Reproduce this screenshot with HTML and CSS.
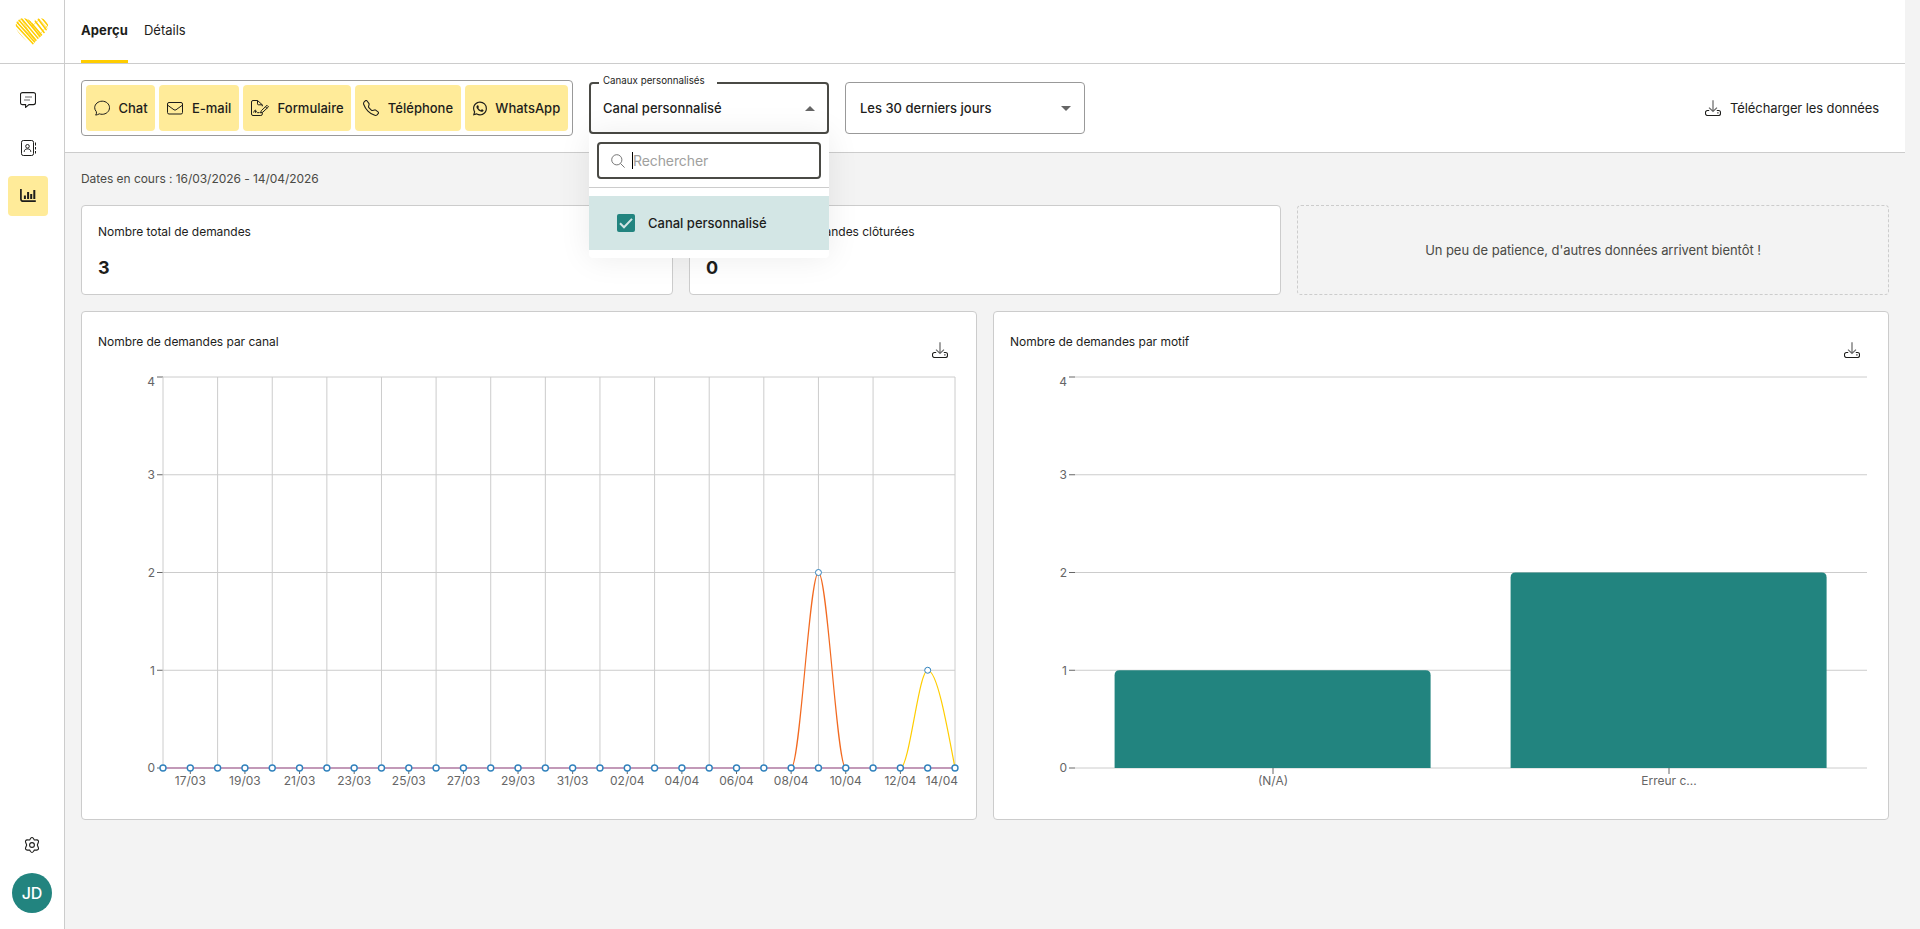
FILE: index.html
```
<!DOCTYPE html>
<html lang="fr">
<head>
  <meta charset="UTF-8" />
  <meta name="viewport" content="width=device-width, initial-scale=1" />
  <title>Statistiques - Aperçu</title>
  <link rel="stylesheet" href="styles.css">
</head>
<body>

  <!-- Icônes partagées -->
  <svg class="sprite" aria-hidden="true">
    <symbol id="i-download" viewBox="0 0 16 16">
      <path d="M8 .2v11M4 7.6l4 3.9 4-3.9" fill="none" stroke="#666" stroke-width="1.2"/>
      <path d="M4.2 10.5H2.4A1.9 1.9 0 0 0 .5 12.4v1.2a1.9 1.9 0 0 0 1.900 1.900h11.200a1.900 1.900 0 0 0 1.900-1.900v-1.200a1.900 1.900 0 0 0-1.900-1.900h-1.800M12.300 12.900h1.200" fill="none" stroke="#1d1d1b" stroke-width="1.100"/>
    </symbol>
  </svg>

  <div class="app">

    <!-- ====== BARRE LATÉRALE ====== -->
    <aside class="sidebar">
      <div class="logo">
        <svg width="34" height="30" viewBox="0 0 34 30" fill="none" stroke="#ffcd00">
          <defs>
            <clipPath id="heart"><path d="M17 29C13 24 1.500 17.500.8 9.500.3 4 4.500 1 9 1.200c3.500.1 6.500 2 8 4.800C18.500 3 21.500 1 25.500 1.200 30 1.500 33.500 4.500 33 9.500 32.200 16 22 21 17 29Z"/></clipPath>
          </defs>
          <g clip-path="url(#heart)">
            <path stroke-width="1.500" d="M-2 5 22 31M1 4 24 30M3 2 25 28M6 1 27 26M9 0 28 23M13 2 30 22M20 4 31 18M23 2 33 15M26 0 35 11"/>
            <path stroke-width=".6" d="M-2 9 18 32M2 6 25 27M5 0 23 29M10 2 29 22M19 2 32 19M15 4 27 25M22 0 34 13M17 9 25 2M25 17 33 8M1 8 7 1"/>
          </g>
        </svg>
      </div>
      <nav class="side-nav">
        <a class="side-item" href="#">
          <svg width="16" height="16" viewBox="0 0 16 16" fill="none" stroke="#1d1d1b">
            <path stroke-width="1.100" d="M2.500.6h11a2 2 0 0 1 2 2v8a2 2 0 0 1-2 2H9L5.600 15.400v-2.800H2.500a2 2 0 0 1-2-2v-8a2 2 0 0 1 2-2Z"/>
            <path stroke="#666" stroke-width="1.100" d="M5 5h7M4 8h6"/>
          </svg>
        </a>
        <a class="side-item" href="#">
          <svg width="16" height="16" viewBox="0 0 16 16" fill="none" stroke="#1d1d1b">
            <rect x="1.500" y=".5" width="12" height="15" rx="1.800"/>
            <circle cx="7.500" cy="6.300" r="1.800"/>
            <path d="M4.300 12v-.6c0-1.600 1.300-2.500 3.200-2.500s3.200.9 3.200 2.500v.6M15.500 2.500v3M15.500 7v2.500M15.500 11v2.500"/>
          </svg>
        </a>
        <a class="side-item active" href="#">
          <svg width="16" height="16" viewBox="0 0 16 16" fill="none" stroke="#1d1d1b">
            <path stroke-width="1.700" d="M.9 1V11a2.200 2.200 0 0 0 2.200 2.200h12.700"/>
            <path stroke-width="2" d="M4.900 7.500v3.500M8.100 4v7M11.200 6v5M14.300 2v9"/>
          </svg>
        </a>
      </nav>
      <div class="side-bottom">
        <svg width="16" height="16" viewBox="0 0 16 16" fill="none" stroke="#1d1d1b" stroke-width="1.100">
          <circle cx="8" cy="8" r="2.400"/>
          <path d="M6.500 1.500Q8-.4 9.500 1.500L10.300 3 12.700 2.900Q15.200 3.200 14.300 5.500L13.300 8l1 2.500Q15.200 12.800 12.700 13.100L10.300 13l-.8 1.500Q8 16.400 6.500 14.500L5.700 13l-2.400.1Q.8 12.800 1.700 10.500L2.700 8l-1-2.500Q.8 3.200 3.300 2.900L5.700 3Z"/>
        </svg>
        <div class="avatar">JD</div>
      </div>
    </aside>

    <div class="main">
      <header class="tabs">
        <a class="tab active" href="#">Aperçu</a>
        <a class="tab" href="#">Détails</a>
      </header>

      <!-- ====== FILTRES ====== -->
      <div class="filters">
        <div class="channels">
          <button class="chip">
            <svg width="16" height="16" viewBox="0 0 16 16" fill="none" stroke="#1d1d1b">
              <path d="M2.300 11.600Q3 13 1.700 15.100q2-.3 3.600-1.300 1.300.5 2.900.5c4 0 7.300-2.900 7.300-6.600S12.200 1.200 8.200 1.200.7 4 .7 7.700q0 2.200 1.600 3.900Z"/>
            </svg>
            <span>Chat</span>
          </button>
          <button class="chip">
            <svg width="16" height="16" viewBox="0 0 16 16" fill="none" stroke="#1d1d1b">
              <rect x=".5" y="2.500" width="15" height="11.500" rx="1.500"/>
              <path d="m.8 5.300 6.200 4.500q1 .6 2 0l6.200-4.500"/>
            </svg>
            <span>E-mail</span>
          </button>
          <button class="chip">
            <svg width="18" height="16" viewBox="0 0 18 16" fill="none" stroke="#1d1d1b">
              <path d="M11.300 12.500V14q0 1.500-1.500 1.500H2Q.5 15.500.5 14V2Q.5.5 2 .5h4.500l4.800 4.300v1.500M6.500.5v3.300q0 1 1 1h3.800"/>
              <path d="m16 5.300 1.500 1.500-5.700 5.400-2.300.7.800-2.200ZM14.500 6.800l1.500 1.500M2.500 12.500q1.500-3 2-2.500.6.400-.2 2.500 1.700-1.600 1.700-.4t2.500.4"/>
            </svg>
            <span>Formulaire</span>
          </button>
          <button class="chip">
            <svg width="16" height="16" viewBox="0 0 16 16" fill="#1d1d1b">
              <path d="M3.654 1.328a.678.678 0 0 0-1.015-.063L1.605 2.300c-.483.484-.661 1.169-.45 1.770a17.600 17.600 0 0 0 4.168 6.608 17.600 17.600 0 0 0 6.608 4.168c.601.211 1.286.033 1.770-.45l1.034-1.034a.678.678 0 0 0-.063-1.015l-2.307-1.794a.68.68 0 0 0-.58-.122l-2.190.547a1.750 1.750 0 0 1-1.657-.459L5.482 8.062a1.750 1.750 0 0 1-.46-1.657l.548-2.190a.68.68 0 0 0-.122-.580zM1.884.511a1.745 1.745 0 0 1 2.612.163L6.290 2.980c.329.423.445.974.315 1.494l-.547 2.190a.68.68 0 0 0 .178.643l2.457 2.457a.68.68 0 0 0 .644.178l2.189-.547a1.750 1.750 0 0 1 1.494.315l2.306 1.794c.829.645.905 1.870.163 2.611l-1.034 1.034c-.740.740-1.846 1.065-2.877.702a18.600 18.600 0 0 1-7.010-4.420 18.600 18.600 0 0 1-4.420-7.009c-.362-1.030-.037-2.137.703-2.877z"/>
            </svg>
            <span>Téléphone</span>
          </button>
          <button class="chip">
            <svg width="14" height="15" viewBox="0 0 16 16" fill="#1d1d1b">
              <path d="M13.601 2.326A7.850 7.850 0 0 0 7.994 0C3.627 0 .068 3.558.064 7.926c0 1.399.366 2.760 1.057 3.965L0 16l4.204-1.102a7.900 7.900 0 0 0 3.790.965h.004c4.368 0 7.926-3.558 7.930-7.930A7.900 7.900 0 0 0 13.600 2.326zM7.994 14.521a6.600 6.600 0 0 1-3.356-.920l-.240-.144-2.494.654.666-2.433-.156-.251a6.560 6.560 0 0 1-1.007-3.505c0-3.626 2.957-6.584 6.591-6.584a6.560 6.560 0 0 1 4.660 1.931 6.560 6.560 0 0 1 1.928 4.660c-.004 3.639-2.961 6.592-6.592 6.592m3.615-4.934c-.197-.099-1.170-.578-1.353-.646-.182-.065-.315-.099-.445.099-.133.197-.513.646-.627.775-.114.133-.232.148-.430.050-.197-.100-.836-.308-1.592-.985-.590-.525-.985-1.175-1.103-1.372-.114-.198-.011-.304.088-.403.087-.088.197-.232.296-.346.100-.114.133-.198.198-.330.065-.134.034-.248-.015-.347-.050-.099-.445-1.076-.612-1.470-.160-.389-.323-.335-.445-.340-.114-.007-.247-.007-.380-.007a.730.730 0 0 0-.529.247c-.182.198-.691.677-.691 1.654s.710 1.916.810 2.049c.098.133 1.394 2.132 3.383 2.992.470.205.840.326 1.129.418.475.152.904.129 1.246.080.380-.058 1.171-.480 1.338-.943.164-.464.164-.860.114-.943-.049-.084-.182-.133-.380-.232"/>
            </svg>
            <span>WhatsApp</span>
          </button>
        </div>

        <div class="select open">
          <span class="select-label">Canaux personnalisés</span>
          <span class="select-value">Canal personnalisé</span>
          <span class="caret"></span>

          <div class="menu">
            <div class="search">
              <svg width="14" height="14" viewBox="0 0 14 14" fill="none" stroke="#777">
                <circle cx="5.800" cy="5.800" r="5.100"/>
                <path d="m9.400 9.400 4.200 4.200"/>
              </svg>
              <span class="cursor"></span>
              <span class="placeholder">Rechercher</span>
            </div>
            <div class="option">
              <svg width="18" height="18" viewBox="0 0 18 18">
                <rect width="18" height="18" rx="2" fill="#22847f"/>
                <path d="m3 9.200 4 4 8-8.300" fill="none" stroke="#d3e6e5" stroke-width="2"/>
              </svg>
              <span>Canal personnalisé</span>
            </div>
          </div>
        </div>

        <div class="select">
          <span class="select-value">Les 30 derniers jours</span>
          <span class="caret"></span>
        </div>

        <a class="download" href="#">
          <svg width="16" height="16"><use href="#i-download"/></svg>
          <span>Télécharger les données</span>
        </a>
      </div>

      <!-- ====== CONTENU ====== -->
      <main class="content">
        <p class="dates">Dates en cours : 16/03/2026 - 14/04/2026</p>

        <section class="stats">
          <div class="card stat">
            <h2>Nombre total de demandes</h2>
            <strong>3</strong>
          </div>
          <div class="card stat">
            <h2>Nombre total de demandes clôturées</h2>
            <strong>0</strong>
          </div>
          <div class="soon">Un peu de patience, d'autres données arrivent bientôt !</div>
        </section>

        <section class="charts">
          <div class="card chart">
            <div class="chart-head">
              <h2>Nombre de demandes par canal</h2>
              <svg width="16" height="16"><use href="#i-download"/></svg>
            </div>
            <svg class="plot" id="lineChart" width="862" height="431"></svg>
          </div>
          <div class="card chart">
            <div class="chart-head">
              <h2>Nombre de demandes par motif</h2>
              <svg width="16" height="16"><use href="#i-download"/></svg>
            </div>
            <svg class="plot" id="barChart" width="862" height="431"></svg>
          </div>
        </section>
      </main>
    </div>
  </div>

  <script>
  const LEFT = 65, RIGHT = 857, TOP = 5, BOTTOM = 396;
  const yPos = v => BOTTOM - v * (BOTTOM - TOP) / 4;
  const line = (cls, x1, y1, x2, y2) => `<line class="${cls}" x1="${x1}" y1="${y1}" x2="${x2}" y2="${y2}"/>`;
  const label = (anchor, x, y, txt) => `<text text-anchor="${anchor}" x="${x}" y="${y}">${txt}</text>`;

  /* Grille horizontale + graduations Y */
  const yAxis = () => {
    let out = "";
    for (let v = 0; v <= 4; v++) {
      const y = yPos(v);
      out += line("grid", LEFT, y, RIGHT, y) + line("tick", LEFT - 6, y, LEFT, y);
      out += label("end", LEFT - 8, (v === 4 ? y + 5 : y) + 4.3, v);
    }
    return out;
  };

  /* ===== Courbes par canal ===== */
  const days = 30;
  const step = (RIGHT - LEFT) / (days - 1);
  const xPos = i => LEFT + i * step;
  const start = new Date(2026, 2, 16);
  const dayLabel = i => {
    const d = new Date(start.getFullYear(), start.getMonth(), start.getDate() + i);
    return String(d.getDate()).padStart(2, "0") + "/" + String(d.getMonth() + 1).padStart(2, "0");
  };
  const series = [
    { color: "#ffcd00", peak: 28, value: 1 },
    { color: "#f26a21", peak: 24, value: 2 }
  ];

  let html = yAxis();
  for (let i = 0; i <= 26; i += 2) html += line("grid", xPos(i), TOP, xPos(i), BOTTOM);
  html += line("grid", RIGHT, TOP, RIGHT, BOTTOM);
  for (let i = 1; i < 29; i += 2) {
    html += line("tick", xPos(i), BOTTOM, xPos(i), BOTTOM + 6);
    html += label("middle", xPos(i), BOTTOM + 17, dayLabel(i));
  }
  html += label("end", RIGHT + 3, BOTTOM + 17, dayLabel(29));

  series.forEach(s => {
    const a = xPos(s.peak - 1), b = xPos(s.peak), c = xPos(s.peak + 1), y = yPos(s.value), t = step / 3;
    // dernier point : la courbe arrive en pente
    const endY = s.peak === 28 ? BOTTOM - (BOTTOM - y) / 2 : BOTTOM;
    html += `<path class="curve" stroke="${s.color}" d="M${a} ${BOTTOM}C${a + t} ${BOTTOM} ${b - t} ${y} ${b} ${y}S${c - t} ${endY} ${c} ${BOTTOM}"/>`;
  });
  html += line("base", LEFT, BOTTOM, RIGHT, BOTTOM);
  for (let i = 0; i < days; i++) html += `<circle class="dot low" cx="${xPos(i)}" cy="${BOTTOM}" r="3"/>`;
  series.forEach(s => html += `<circle class="dot" cx="${xPos(s.peak)}" cy="${yPos(s.value)}" r="3"/>`);
  document.getElementById("lineChart").innerHTML = html;

  /* ===== Barres par motif ===== */
  const reasons = [["(N/A)", 1], ["Erreur c...", 2]];
  const band = (RIGHT - LEFT) / reasons.length;
  html = yAxis();
  reasons.forEach(([name, value], i) => {
    const x = LEFT + i * band + band * 0.1, y = yPos(value), cx = LEFT + (i + 0.5) * band;
    html += `<path class="bar" d="M${x} ${BOTTOM}V${y + 5}q0-5 5-5h306q5 0 5 5V${BOTTOM}Z"/>`;
    html += line("tick", cx, BOTTOM, cx, BOTTOM + 6) + label("middle", cx, BOTTOM + 17, name);
  });
  document.getElementById("barChart").innerHTML = html;
  </script>
</body>
</html>
```
FILE: styles.css
```
*{margin:0;padding:0;box-sizing:border-box}

body{
  background:#f3f3f3;color:#1d1d1b;
  font-family:Inter,"Liberation Sans",sans-serif;
  font-size:13px
}
a{color:inherit;text-decoration:none}
svg{display:block;flex:none}
.sprite{width:0;height:0;position:absolute}
.app{display:flex;height:929px}

/* === Barre latérale === */
.sidebar{
  width:65px;background:#fff;border-right:1px solid #ccc;
  display:flex;flex-direction:column
}
.logo{
  height:64px;border-bottom:1px solid #ccc;
  display:flex;align-items:center;justify-content:center
}
.side-nav{display:flex;flex-direction:column;gap:8px;padding:16px 8px}
.side-item{
  width:40px;height:40px;border-radius:4px;
  display:flex;align-items:center;justify-content:center
}
.side-item.active{background:#ffeb99}
.side-bottom{
  margin-top:auto;padding-bottom:16px;
  display:flex;flex-direction:column;align-items:center;gap:20px
}
.avatar{
  width:40px;height:40px;border-radius:50%;
  background:#22847f;color:#fff;font-size:16px;font-weight:500;
  display:flex;align-items:center;justify-content:center
}

/* === Onglets === */
.main{flex:1;margin-right:15px;min-width:0}
.tabs{
  height:64px;padding:0 16px;background:#fff;border-bottom:1px solid #ccc;
  display:flex;gap:16px
}
.tab{height:63px;line-height:61px;border-bottom:3px solid transparent}
.tab.active{font-weight:700;letter-spacing:.1px;border-color:#ffcd00}

/* === Filtres === */
.filters{
  height:89px;padding:0 26px 0 16px;background:#fff;border-bottom:1px solid #ccc;
  display:flex;align-items:center;gap:16px
}
.channels{
  width:492px;height:56px;padding:4px;border:1px solid #999;border-radius:4px;
  display:flex;gap:4px;flex:none
}
.chip{
  flex:auto;border:none;border-radius:4px;background:#ffeb99;color:inherit;
  font:500 13px Inter,sans-serif;padding:0 7.5px 0 8px;
  display:flex;align-items:center;gap:8.5px
}
.select{
  position:relative;width:240px;height:52px;padding:0 13px 0 14px;
  border:1px solid #999;border-radius:4px;background:#fff;
  display:flex;align-items:center;justify-content:space-between;
  font-weight:500
}
.select.open{border:2px solid #4a4a45;padding:0 12px}
.select-label{
  position:absolute;top:-10px;left:8px;padding:0 12px 0 4px;background:#fff;
  font-size:9.75px;font-weight:400;line-height:14px
}
.caret{border:5px solid transparent;border-top-color:#666;border-bottom:0}
.open .caret{border-top:0;border-bottom:5px solid #666}

/* menu déroulant */
.menu{
  position:absolute;top:50px;left:-2px;width:240px;padding:8px 0;z-index:10;
  background:#fff;border-radius:0 0 4px 4px;
  box-shadow:0 0 32px rgba(0,0,0,.08)
}
.search{
  height:37px;margin:0 8px;padding:0 12px;
  border:2px solid #4a4a45;border-radius:4px;
  display:flex;align-items:center;
  font-size:14px;font-weight:400;letter-spacing:-.1px
}
.cursor{width:1px;height:17px;margin-left:7px;background:#000}
.placeholder{color:#a0a09e}
.option{
  height:54px;margin-top:17px;padding:0 28px;background:#d3e6e5;
  box-shadow:0 -8px #fff,0 -9px #ccc;
  display:flex;align-items:center;gap:13px
}

.download{
  margin-left:auto;padding-bottom:1px;letter-spacing:-.1px;
  display:flex;align-items:center;gap:9px
}

/* === Contenu === */
.content{padding:16px 16px 0}
.dates{height:20px;line-height:20px;margin-bottom:16px;font-size:12px;letter-spacing:-.05px;color:#4a4a45}
.card{background:#fff;border:1px solid #ccc;border-radius:4px}
.card h2{font-size:12px;font-weight:400;letter-spacing:-.04px}
.stats{display:grid;grid-template-columns:repeat(3,1fr);gap:16px;margin-bottom:16px}
.stat{height:90px;padding:16px}
.stat h2{line-height:20px}
.stat strong{display:block;margin-top:14px;font-size:18px;line-height:24px;font-weight:700}
.soon{
  border:1px dashed #ccc;border-radius:4px;color:#4a4a45;letter-spacing:-.06px;
  display:flex;align-items:center;justify-content:center
}
.charts{display:grid;grid-template-columns:1fr 1fr;gap:16px}
.chart{height:509px;padding:16px}
.chart-head{height:44px;padding-right:12px;display:flex;justify-content:space-between}
.chart-head h2{line-height:28px}
.chart-head svg{margin-top:14px}

/* graphiques */
.plot{overflow:visible}
.plot text{font-size:12px;fill:#666}
.grid{stroke:#ccc}
.tick{stroke:#666}
.base{stroke:#c299b8;stroke-width:2}
.curve{fill:none;stroke-width:1.2}
.dot{fill:#fff;stroke:#3182bd;stroke-width:1}
.dot.low{stroke-width:1.4}
.bar{fill:#22847f}
```
